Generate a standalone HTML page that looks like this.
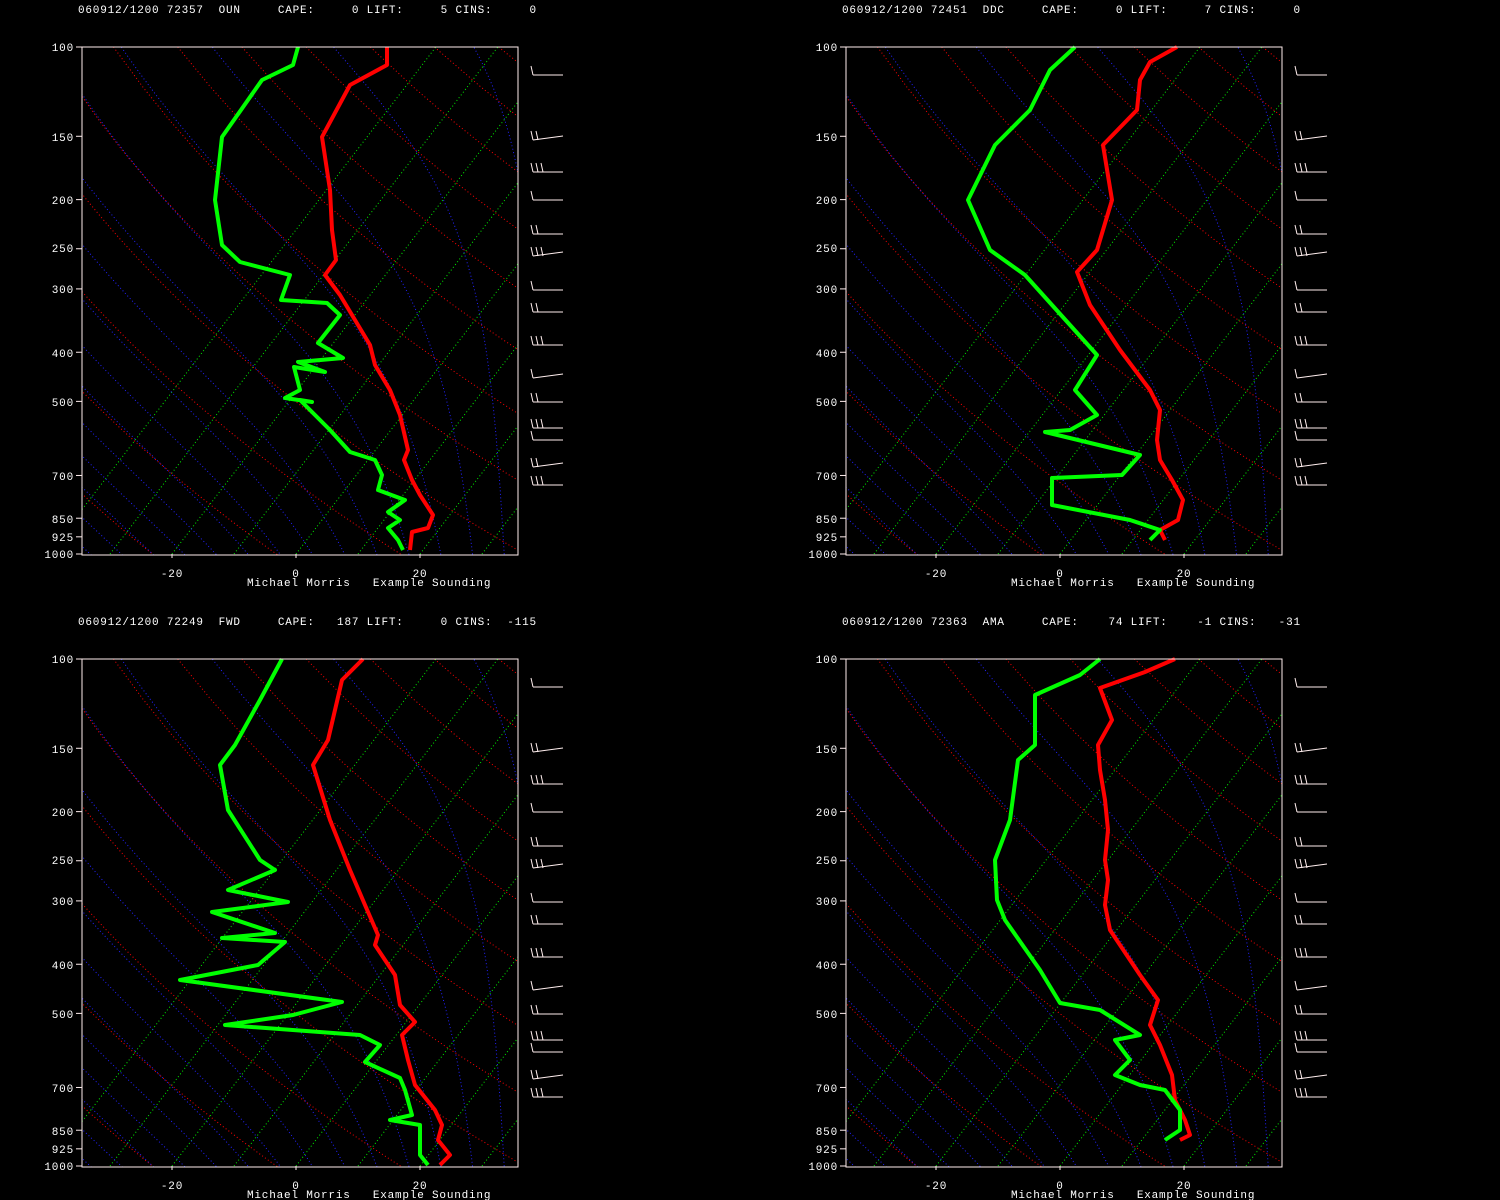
<!DOCTYPE html>
<html><head><meta charset="utf-8">
<style>
html,body{margin:0;padding:0;background:#000;width:1500px;height:1200px;overflow:hidden}
svg{position:absolute;left:0;top:0}
text{font-family:"Liberation Mono",monospace;font-size:11px;letter-spacing:0.8px;fill:#fff;white-space:pre}
</style></head><body>
<svg id="s" width="1500" height="1200" xmlns="http://www.w3.org/2000/svg">
<defs>
<clipPath id="c0"><rect x="82" y="47" width="436" height="508"/></clipPath>
<clipPath id="c1"><rect x="846" y="47" width="436" height="508"/></clipPath>
<clipPath id="c2"><rect x="82" y="659" width="436" height="508"/></clipPath>
<clipPath id="c3"><rect x="846" y="659" width="436" height="508"/></clipPath>
</defs>
<g id="grid"></g>
<g id="txt">
<text x="78" y="13" xml:space="preserve">060912/1200 72357  OUN     CAPE:     0 LIFT:     5 CINS:     0</text>
<text x="842" y="13" xml:space="preserve">060912/1200 72451  DDC     CAPE:     0 LIFT:     7 CINS:     0</text>
<text x="78" y="625" xml:space="preserve">060912/1200 72249  FWD     CAPE:   187 LIFT:     0 CINS:  -115</text>
<text x="842" y="625" xml:space="preserve">060912/1200 72363  AMA     CAPE:    74 LIFT:    -1 CINS:   -31</text>
</g>
</svg>
<script>
var G=document.getElementById('grid'),NS='http://www.w3.org/2000/svg';
function el(t,a,p){var e=document.createElementNS(NS,t);for(var k in a)e.setAttribute(k,a[k]);(p||G).appendChild(e);return e;}
function yp(p){return 507*Math.log(p/100)/Math.LN10;}
var SK=0.765;
var offs=[[0,0],[764,0],[0,612],[764,612]];
var T=[
"387,47 387,65 350,85 322,137 330,190 332,230 336,260 325,275 340,295 355,320 370,345 375,365 390,390 400,415 408,450 404,460 412,480 420,495 433,515 428,528 412,532 410,550",
"1177,47 1150,62 1140,80 1137,110 1103,145 1112,200 1097,250 1077,272 1090,305 1120,350 1150,390 1160,410 1157,440 1160,460 1172,480 1183,500 1178,520 1160,530 1165,540",
"363,659 342,680 328,740 313,765 330,820 350,870 365,905 378,935 375,945 395,975 400,1005 415,1022 402,1035 408,1060 415,1085 435,1110 442,1125 438,1140 450,1155 440,1165",
"1175,659 1145,672 1100,688 1112,720 1098,745 1100,770 1105,800 1108,830 1105,860 1108,880 1105,905 1110,930 1140,975 1158,1000 1150,1025 1160,1045 1172,1075 1175,1100 1185,1120 1190,1135 1180,1140"];
var D=[
"298,47 293,65 262,80 222,137 215,200 222,245 240,262 290,275 281,300 327,303 340,315 318,343 343,358 298,362 325,372 294,367 300,390 285,398 312,402 300,400 330,430 350,452 375,460 382,475 378,490 405,500 388,512 400,520 388,528 398,540 403,550",
"1075,47 1050,70 1030,110 995,145 968,200 990,250 1025,275 1097,355 1075,390 1097,415 1070,430 1045,432 1140,455 1122,475 1052,478 1052,505 1130,520 1160,530 1150,540",
"282,659 260,700 235,745 220,765 228,810 260,860 275,870 228,890 288,902 212,912 275,933 222,938 285,942 258,965 180,980 342,1002 293,1015 225,1025 360,1035 380,1045 365,1062 400,1078 405,1090 412,1115 390,1120 420,1125 420,1155 428,1165",
"1100,659 1080,675 1035,695 1035,745 1018,760 1010,820 995,860 997,900 1005,920 1040,970 1060,1003 1100,1010 1140,1035 1115,1040 1130,1060 1115,1075 1140,1085 1165,1090 1180,1110 1180,1130 1165,1140"];
var levs=[100,150,200,250,300,400,500,700,850,925,1000];
function moist(t0){var Tk=t0+273.15,pts=[],p=1050;
 while(p>=100){pts.push([p,Tk-273.15]);var Tc=Tk-273.15;var es=6.112*Math.exp(17.67*Tc/(Tc+243.5));var rs=0.622*es/(p-es);
  var dTdp=(1/p)*(287*Tk+2.5e6*rs)/(1004+2.5e6*2.5e6*rs*0.622/(287*Tk*Tk));Tk-=dTdp*5;p-=5;}
 return pts;}
var barbY=[75,140,172,200,234,256,290,312,345,378,402,428,440,467,485];
offs.forEach(function(o,i){
 var ox=o[0],oy=o[1],top=47+oy,bot=top+507;
 var g=el('g',{'clip-path':'url(#c'+i+')'});
 function X(Tc,y){return 296+ox+6.2*Tc+SK*(bot-y);}
 for(var t=-40;t<=60;t+=10){el('line',{x1:X(t,bot),y1:bot,x2:X(t,top),y2:top,stroke:'#0e0',"stroke-dasharray":'1,2.5'},g);}
 for(var th=190;th<=550;th+=20){var pts=[];for(var p=100;p<=1050;p+=20){var y=top+yp(p);var Tc=th*Math.pow(p/1000,0.286)-273.15;pts.push(X(Tc,y).toFixed(1)+','+y.toFixed(1));}
  el('polyline',{points:pts.join(' '),fill:'none',stroke:'#f00','stroke-dasharray':'1,2.5'},g);}
 for(var t0=-60;t0<=40;t0+=5){var pts=moist(t0).map(function(q){var y=top+yp(q[0]);return X(q[1],y).toFixed(1)+','+y.toFixed(1);});
  el('polyline',{points:pts.join(' '),fill:'none',stroke:'#22f','stroke-dasharray':'1,2.5'},g);}
 el('polyline',{points:T[i],fill:'none',stroke:'#f00','stroke-width':4,'stroke-linejoin':'round'});
 el('polyline',{points:D[i],fill:'none',stroke:'#0f0','stroke-width':4,'stroke-linejoin':'round'});
 el('rect',{x:82+ox,y:top,width:436,height:508,fill:'none',stroke:'#fee','stroke-width':1});
 levs.forEach(function(p){var y=top+yp(p);el('line',{x1:76+ox,y1:y,x2:82+ox,y2:y,stroke:'#fee'});});
 [-20,0,20].forEach(function(t){var x=296+ox+6.2*t;el('line',{x1:x,y1:bot,x2:x,y2:bot+4,stroke:'#fee'});});
 barbY.forEach(function(yy,k){var y=yy+oy,bx=533+ox;
  el('line',{x1:bx,y1:y,x2:bx+30,y2:y-(k%4==1?4:0),stroke:'#fee'});
  var n=1+(k%3);for(var b=0;b<n;b++)el('line',{x1:bx+b*5,y1:y,x2:bx+b*5-2,y2:y-9,stroke:'#fee'});});
});
</script>
<svg width="1500" height="1200" style="pointer-events:none">
<g text-anchor="end">
<text x="74" y="51">100</text><text x="74" y="141">150</text><text x="74" y="204">200</text><text x="74" y="252">250</text><text x="74" y="293">300</text><text x="74" y="357">400</text><text x="74" y="406">500</text><text x="74" y="480">700</text><text x="74" y="523">850</text><text x="74" y="541">925</text><text x="74" y="558">1000</text>
<text x="838" y="51">100</text><text x="838" y="141">150</text><text x="838" y="204">200</text><text x="838" y="252">250</text><text x="838" y="293">300</text><text x="838" y="357">400</text><text x="838" y="406">500</text><text x="838" y="480">700</text><text x="838" y="523">850</text><text x="838" y="541">925</text><text x="838" y="558">1000</text>
<text x="74" y="663">100</text><text x="74" y="753">150</text><text x="74" y="816">200</text><text x="74" y="864">250</text><text x="74" y="905">300</text><text x="74" y="969">400</text><text x="74" y="1018">500</text><text x="74" y="1092">700</text><text x="74" y="1135">850</text><text x="74" y="1153">925</text><text x="74" y="1170">1000</text>
<text x="838" y="663">100</text><text x="838" y="753">150</text><text x="838" y="816">200</text><text x="838" y="864">250</text><text x="838" y="905">300</text><text x="838" y="969">400</text><text x="838" y="1018">500</text><text x="838" y="1092">700</text><text x="838" y="1135">850</text><text x="838" y="1153">925</text><text x="838" y="1170">1000</text>
</g>
<g text-anchor="middle">
<text x="172" y="577">-20</text><text x="296" y="577">0</text><text x="420" y="577">20</text>
<text x="936" y="577">-20</text><text x="1060" y="577">0</text><text x="1184" y="577">20</text>
<text x="172" y="1189">-20</text><text x="296" y="1189">0</text><text x="420" y="1189">20</text>
<text x="936" y="1189">-20</text><text x="1060" y="1189">0</text><text x="1184" y="1189">20</text>
</g>
<g>
<text x="247" y="586" xml:space="preserve">Michael Morris   Example Sounding</text>
<text x="1011" y="586" xml:space="preserve">Michael Morris   Example Sounding</text>
<text x="247" y="1198" xml:space="preserve">Michael Morris   Example Sounding</text>
<text x="1011" y="1198" xml:space="preserve">Michael Morris   Example Sounding</text>
</g></svg>
</body></html>
